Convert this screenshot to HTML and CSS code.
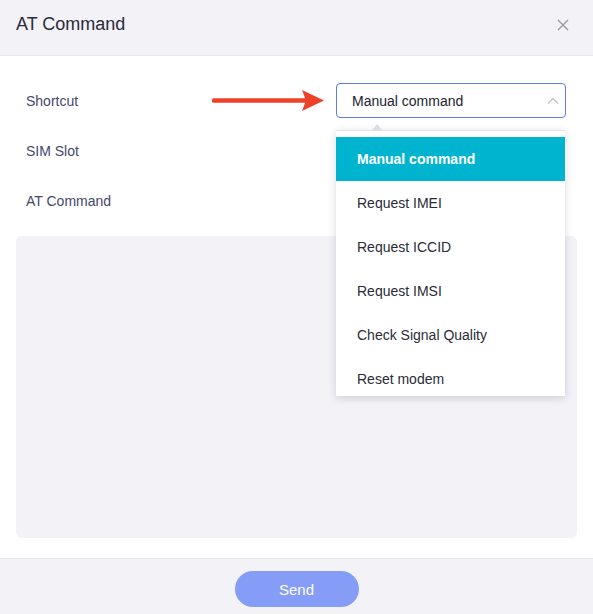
FILE: index.html
```html
<!DOCTYPE html>
<html>
<head>
<meta charset="utf-8">
<link rel="stylesheet" href="styles.css">
</head>
<body>
<div class="modal">
  <header class="header">
    <h1 class="title">AT Command</h1>
    <svg class="close" width="12" height="12" viewBox="0 0 12 12"><path d="M1 1L11 11M11 1L1 11" stroke="#9a9aa2" stroke-width="1.4" fill="none"/></svg>
  </header>
  <main class="content">
    <div class="row">
      <span class="label">Shortcut</span>
      <svg class="arrow" width="114" height="22" viewBox="0 0 114 22"><path d="M2 10.5H94" stroke="#ee4129" stroke-width="4.4" stroke-linecap="round"/><path d="M90 0L112 10.5L90 21L94 10.5Z" fill="#ee4129"/></svg>
      <div class="select">
        <div class="select-box">
          <span class="select-value">Manual command</span>
          <svg class="chev" width="12" height="7" viewBox="0 0 12 7"><path d="M1 6.5L6 1.5L11 6.5" stroke="#c0c0c8" stroke-width="1.3" fill="none"/></svg>
        </div>
        <div class="menu">
          <div class="caret"></div>
          <ul class="options">
            <li class="option active">Manual command</li>
            <li class="option">Request IMEI</li>
            <li class="option">Request ICCID</li>
            <li class="option">Request IMSI</li>
            <li class="option">Check Signal Quality</li>
            <li class="option">Reset modem</li>
          </ul>
        </div>
      </div>
    </div>
    <div class="row"><span class="label">SIM Slot</span></div>
    <div class="row"><span class="label">AT Command</span></div>
    <div class="textarea"></div>
  </main>
  <footer class="footer">
    <button class="send">Send</button>
  </footer>
</div>
</body>
</html>
```

FILE: styles.css
```css
html, body {
  margin: 0;
  padding: 0;
  background: #ffffff;
  font-family: "Liberation Sans", Arial, sans-serif;
}
.modal {
  width: 593px;
  height: 614px;
  display: flex;
  flex-direction: column;
  overflow: hidden;
}
.header {
  box-sizing: border-box;
  height: 56px;
  padding: 0 24px 6px 16px;
  background: #f2f2f7;
  border-bottom: 1px solid #e6e6ee;
  display: flex;
  align-items: center;
  justify-content: space-between;
}
.title {
  margin: 0;
  font-size: 18px;
  font-weight: normal;
  color: #2b2b3d;
}
.content {
  box-sizing: border-box;
  height: 502px;
  padding: 27px 16px 0 16px;
  display: flex;
  flex-direction: column;
  gap: 15px;
}
.row {
  height: 35px;
  padding: 0 11px 0 10px;
  display: flex;
  align-items: center;
  position: relative;
}
.label {
  font-size: 14px;
  color: #46466e;
  width: 176px;
}
.arrow {
  margin-left: 10px;
  margin-top: 1px;
}
.select {
  margin-left: auto;
  width: 230px;
  position: relative;
  z-index: 2;
}
.select-box {
  box-sizing: border-box;
  height: 35px;
  border: 1px solid #5b7cf0;
  border-radius: 4px;
  display: flex;
  align-items: center;
  justify-content: space-between;
  padding: 0 6px 0 15px;
  background: #fff;
}
.select-value {
  font-size: 14px;
  color: #222230;
}
.menu {
  position: absolute;
  top: 47px;
  left: 0;
  width: 229px;
}
.caret {
  position: absolute;
  top: -6px;
  left: 36px;
  width: 0;
  height: 0;
  border-left: 5px solid transparent;
  border-right: 5px solid transparent;
  border-bottom: 6px solid #dcdce2;
}
.options {
  list-style: none;
  margin: 0;
  padding: 6px 0 0 0;
  height: 266px;
  box-sizing: border-box;
  overflow: hidden;
  background: #fff;
  border-top: 1px solid #e4e4ea;
  box-shadow: 0 2px 8px rgba(40, 40, 70, 0.18);
}
.option {
  height: 44px;
  line-height: 44px;
  padding-left: 21px;
  font-size: 14px;
  color: #2b2b38;
}
.option.active {
  background: #00b4d0;
  color: #fff;
  font-weight: bold;
}
.textarea {
  margin-top: 3px;
  height: 302px;
  background: #f2f2f7;
  border-radius: 6px;
}
.footer {
  box-sizing: border-box;
  height: 56px;
  background: #f2f2f7;
  border-top: 1px solid #e6e6ee;
  padding-top: 12px;
  display: flex;
  justify-content: center;
  align-items: flex-start;
}
.send {
  width: 124px;
  height: 36px;
  border: none;
  border-radius: 18px;
  background: #869df8;
  color: #fff;
  font-family: "Liberation Sans", Arial, sans-serif;
  font-size: 15px;
}
```
